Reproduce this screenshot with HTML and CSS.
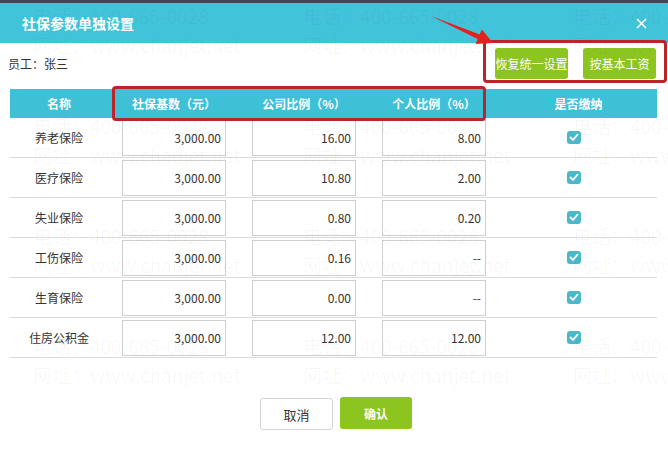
FILE: index.html
```html
<!DOCTYPE html>
<html lang="zh-CN">
<head>
  <meta charset="UTF-8">
  <title>社保参数单独设置</title>
  <link rel="stylesheet" href="styles.css">
</head>
<body>
  <div class="dialog">
    <div class="topline"></div>
    <div class="titlebar">
      <span class="title">社保参数单独设置</span>
      <svg class="close" width="11" height="11" viewBox="0 0 11 11"><path d="M1 1L10 10M10 1L1 10" stroke="#fff" stroke-width="1.6"/></svg>
    </div>

    <div class="toolbar">
      <span class="emp">员工：张三</span>
      <div class="tools">
        <button class="btn green">恢复统一设置</button>
        <button class="btn green">按基本工资</button>
      </div>
    </div>

    <div class="grid">
      <div class="head">
        <div>名称</div>
        <div>社保基数（元）</div>
        <div>公司比例（%）</div>
        <div>个人比例（%）</div>
        <div>是否缴纳</div>
      </div>

      <div class="row">
        <div class="name">养老保险</div>
        <div><input class="num" value="3,000.00"></div>
        <div><input class="num" value="16.00"></div>
        <div><input class="num" value="8.00"></div>
        <div><span class="check"><svg width="10" height="8" viewBox="0 0 10 8"><path d="M1 4l3 3 5-6" fill="none" stroke="#fff" stroke-width="1.8"/></svg></span></div>
      </div>
      <div class="row">
        <div class="name">医疗保险</div>
        <div><input class="num" value="3,000.00"></div>
        <div><input class="num" value="10.80"></div>
        <div><input class="num" value="2.00"></div>
        <div><span class="check"><svg width="10" height="8" viewBox="0 0 10 8"><path d="M1 4l3 3 5-6" fill="none" stroke="#fff" stroke-width="1.8"/></svg></span></div>
      </div>
      <div class="row">
        <div class="name">失业保险</div>
        <div><input class="num" value="3,000.00"></div>
        <div><input class="num" value="0.80"></div>
        <div><input class="num" value="0.20"></div>
        <div><span class="check"><svg width="10" height="8" viewBox="0 0 10 8"><path d="M1 4l3 3 5-6" fill="none" stroke="#fff" stroke-width="1.8"/></svg></span></div>
      </div>
      <div class="row">
        <div class="name">工伤保险</div>
        <div><input class="num" value="3,000.00"></div>
        <div><input class="num" value="0.16"></div>
        <div><input class="num" value="--"></div>
        <div><span class="check"><svg width="10" height="8" viewBox="0 0 10 8"><path d="M1 4l3 3 5-6" fill="none" stroke="#fff" stroke-width="1.8"/></svg></span></div>
      </div>
      <div class="row">
        <div class="name">生育保险</div>
        <div><input class="num" value="3,000.00"></div>
        <div><input class="num" value="0.00"></div>
        <div><input class="num" value="--"></div>
        <div><span class="check"><svg width="10" height="8" viewBox="0 0 10 8"><path d="M1 4l3 3 5-6" fill="none" stroke="#fff" stroke-width="1.8"/></svg></span></div>
      </div>
      <div class="row">
        <div class="name">住房公积金</div>
        <div><input class="num" value="3,000.00"></div>
        <div><input class="num" value="12.00"></div>
        <div><input class="num" value="12.00"></div>
        <div><span class="check"><svg width="10" height="8" viewBox="0 0 10 8"><path d="M1 4l3 3 5-6" fill="none" stroke="#fff" stroke-width="1.8"/></svg></span></div>
      </div>
    </div>

    <div class="footer">
      <button class="btn plain">取消</button>
      <button class="btn green bold">确认</button>
    </div>

    <!-- watermark -->
    <div class="watermark">
      <div><p>电话：400-665-0028</p><p>网址：www.chanjet.net</p></div>
      <div><p>电话：400-665-0028</p><p>网址：www.chanjet.net</p></div>
      <div><p>电话：400-665-0028</p><p>网址：www.chanjet.net</p></div>
      <div><p>电话：400-665-0028</p><p>网址：www.chanjet.net</p></div>
      <div><p>电话：400-665-0028</p><p>网址：www.chanjet.net</p></div>
      <div><p>电话：400-665-0028</p><p>网址：www.chanjet.net</p></div>
      <div><p>电话：400-665-0028</p><p>网址：www.chanjet.net</p></div>
      <div><p>电话：400-665-0028</p><p>网址：www.chanjet.net</p></div>
      <div><p>电话：400-665-0028</p><p>网址：www.chanjet.net</p></div>
      <div><p>电话：400-665-0028</p><p>网址：www.chanjet.net</p></div>
      <div><p>电话：400-665-0028</p><p>网址：www.chanjet.net</p></div>
      <div><p>电话：400-665-0028</p><p>网址：www.chanjet.net</p></div>
    </div>

    <!-- red markup -->
    <div class="mark mark-tools"></div>
    <div class="mark mark-head"></div>
    <svg class="arrow" width="668" height="60" viewBox="0 0 668 60">
      <polygon points="431,16 479.7,34.4 481.9,29.4 493,43 475.5,44 477.7,39" fill="#e3211f"/>
    </svg>
  </div>
</body>
</html>
```

FILE: styles.css
```css
body {
  margin: 0;
  background: #fff;
  font-family: "Noto Sans CJK SC", "Noto Sans", sans-serif;
  color: #333;
}
.dialog {
  position: relative;
  width: 668px;
  height: 451px;
  overflow: hidden;
  background: #fff;
}
.topline {
  height: 3px;
  background: #3d4b51;
}
.titlebar {
  height: 40px;
  background: #41c3d9;
  display: flex;
  align-items: center;
  justify-content: space-between;
  padding: 0 22px;
}
.title {
  color: #fff;
  font-size: 14px;
  font-weight: bold;
}
.close {
  margin-right: -1px;
  margin-top: 1px;
}
.toolbar {
  height: 41px;
  display: flex;
  align-items: center;
  justify-content: space-between;
  padding: 0 12px 0 8px;
}
.emp {
  font-size: 12px;
}
.tools {
  display: flex;
  gap: 15px;
}
.btn {
  height: 31px;
  border: none;
  border-radius: 3px;
  font-family: inherit;
  font-size: 12px;
  padding: 0;
  cursor: pointer;
}
.btn.green {
  background: #8cc51f;
  color: #fff;
}
.tools .btn {
  width: 73px;
}
.grid {
  margin: 5px 11px 0 10px;
}
.head, .row {
  display: grid;
  grid-template-columns: 98px 132px 128px 132px 157px;
}
.head {
  height: 29px;
  background: #3ec0d7;
  color: #fff;
  font-size: 12px;
  font-weight: bold;
}
.head div {
  display: flex;
  align-items: center;
  justify-content: center;
}
.row {
  height: 39px;
  border-bottom: 1px solid #dcdcdc;
}
.row div {
  display: flex;
  align-items: center;
  justify-content: center;
}
.name {
  font-size: 12px;
}
.num {
  width: 104px;
  height: 36px;
  box-sizing: border-box;
  border: 1px solid #cfcfcf;
  padding: 0 4px;
  text-align: right;
  font-family: inherit;
  font-size: 12px;
  color: #333;
  background: transparent;
}
.check {
  width: 14px;
  height: 13px;
  border-radius: 3px;
  background: #4ab7cb;
  display: flex;
  align-items: center;
  justify-content: center;
  margin: -1px 10px 0 0;
}
.footer {
  display: flex;
  justify-content: center;
  gap: 7px;
  margin-top: 40px;
  padding-left: 4px;
}
.btn.plain {
  width: 73px;
  height: 32px;
  background: #fff;
  border: 1px solid #d4d4d4;
  color: #333;
  font-size: 13px;
}
.footer .btn.green {
  width: 72px;
  height: 32px;
  margin-top: -1px;
  font-size: 12px;
}
.bold {
  font-weight: bold;
}
.watermark {
  position: absolute;
  inset: 0;
  display: grid;
  grid-template-columns: repeat(3, 270px);
  grid-auto-rows: 110px;
  padding: 1px 0 0 33px;
  pointer-events: none;
  color: rgba(0, 0, 0, 0.035);
  font-size: 19px;
  white-space: nowrap;
}
.watermark p {
  margin: 0;
  line-height: 29px;
}
.mark {
  position: absolute;
  border: 3px solid #b8262a;
  border-radius: 4px;
  pointer-events: none;
}
.mark-tools {
  left: 483px;
  top: 40px;
  width: 178px;
  height: 37px;
}
.mark-head {
  left: 112px;
  top: 86px;
  width: 368px;
  height: 29px;
}
.arrow {
  position: absolute;
  left: 0;
  top: 0;
  pointer-events: none;
}
```
